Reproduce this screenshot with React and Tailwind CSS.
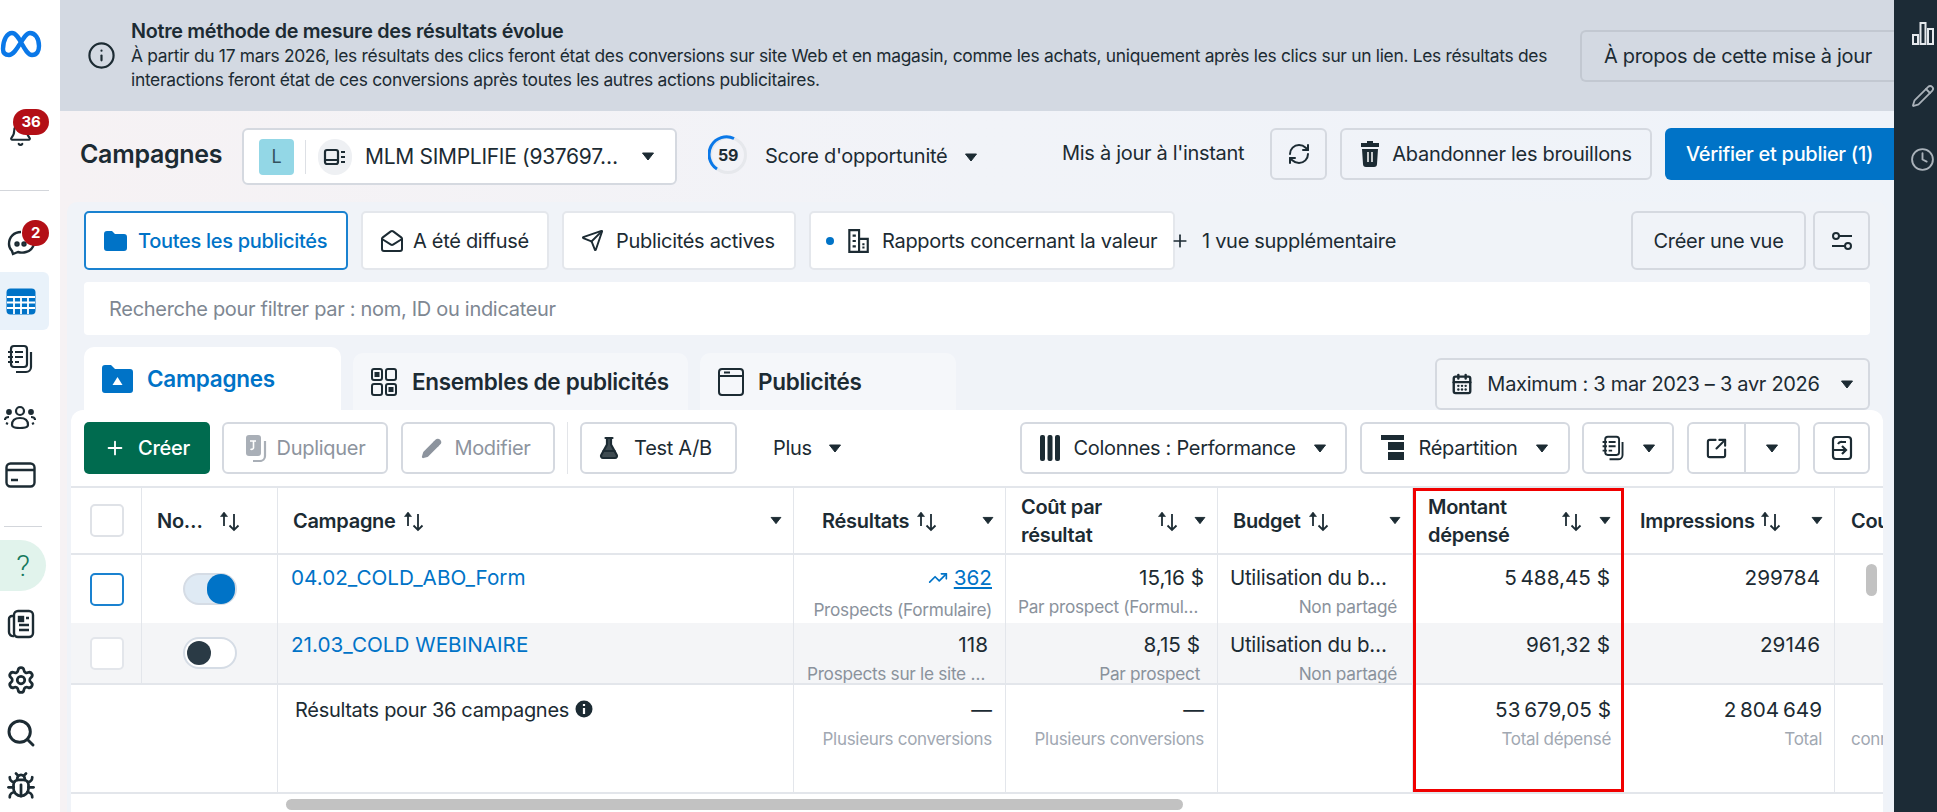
import {
  Bell, Bug, Clock, Info, MailOpen, Pencil, Plus, RefreshCw, Search, Send,
  Settings, SquareArrowOutUpRight, TrendingUp, CalendarDays, FlaskConical,
} from 'lucide-react';

const Caret = ({ className = '' }) => (
  <svg width="14" height="9" viewBox="0 0 14 9" className={`shrink-0 ${className}`}>
    <path d="M1.5 1h11L7 8z" fill="#1c2b33" stroke="#1c2b33" strokeLinejoin="round" />
  </svg>
);

const Sort = ({ className = '' }) => (
  <svg width="23" height="22" viewBox="0 0 23 22" fill="none" stroke="#1c2b33" strokeWidth="1.8" className={`shrink-0 ${className}`}>
    <path d="M6 16V3" />
    <path d="M2.500 6.500 6 2l3.500 4.500z" fill="#1c2b33" strokeWidth="0.6" />
    <path d="M16 4v16M11.500 15.500 16 20l4.500-4.500" />
  </svg>
);

const DocStack = ({ color = '#1c2b33', size = 30 }) => (
  <svg width={size} height={size} viewBox="0 0 30 30" fill="none" stroke={color} strokeWidth="2.2">
    <rect x="6" y="2" width="16" height="21" rx="3" />
    <path d="M26 8v15a5 5 0 0 1-5 5H11" />
    <path d="M10 8h8M10 13h8M10 18h4M3 8h5M3 13h5M3 18h5" />
  </svg>
);

function Btn({ className = '', border = 'border-[#d5d9e0]', tone = 'text-[#1c2b33]', children }) {
  return (
    <div className={`flex items-center justify-center rounded-[6px] border-2 text-[20px] shrink-0 ${border} ${tone} ${className}`}>
      {children}
    </div>
  );
}

function Rail() {
  return (
    <aside className="w-[60px] shrink-0 bg-white flex flex-col text-[#1c2b33]">
      <div className="h-[88px] pt-[29px]">
        <svg width="42" height="30" viewBox="0 0 42 30" fill="none" stroke="#0a78e8" strokeWidth="4.4" strokeLinecap="round">
          <path d="M3 20c0-9 4-16 9-16 8 0 12 22 20 22 5 0 7-4 7-9 0-8-4-13-9-13-7 0-13 22-21 22-4 0-6-2-6-6z" />
        </svg>
      </div>
      <div className="relative h-[103px] w-[49px] border-b border-[#d3d6db] pt-[34px] pl-[8px]">
        <Bell size={25} strokeWidth={2} />
        <span className="absolute left-[13px] top-[21px] w-[36px] h-[26px] rounded-full bg-[#b30f16] text-white text-[15px] font-bold flex items-center justify-center">36</span>
      </div>
      <div className="relative h-[81px] pt-[37px] pl-[6px]">
        <svg width="30" height="30" viewBox="0 0 30 30" fill="none" stroke="#1c2b33" strokeWidth="2.4">
          <path d="M15 4C8 4 3 9 3 16c0 3 1 5 3 7l1 3 5-2c3 1 5 1 8 0 4-1 7-4 8-8" />
          <circle cx="11" cy="16" r="1.500" />
          <circle cx="18" cy="16" r="1.500" />
        </svg>
        <span className="absolute left-[22px] top-[29px] w-[27px] h-[26px] rounded-full bg-[#b30f16] text-white text-[15px] font-bold flex items-center justify-center">2</span>
      </div>
      <div className="w-[49px] h-[58px] rounded-r-[6px] bg-[#e9f2fa] flex items-center pl-[6px]">
        <svg width="30" height="27" viewBox="0 0 30 27">
          <rect width="29" height="26" x="0.5" y="0.5" rx="4" fill="#0073c7" />
          <path d="M1 9h28M1 14.500h28M1 20h28M8 9v17M15 9v17M22 9v17" stroke="#fff" strokeWidth="1.8" />
        </svg>
      </div>
      <div className="h-[58px] flex items-center pl-[5px]"><DocStack /></div>
      <div className="h-[58px] flex items-center pl-[4px]">
        <svg width="32" height="24" viewBox="0 0 32 24" fill="none" stroke="#1c2b33" strokeWidth="2.2">
          <circle cx="16" cy="6" r="4" />
          <path d="M8 20c0-5 3-7 8-7s8 2 8 7c0 2-3 3-8 3s-8-1-8-3z" />
          <circle cx="5" cy="7" r="1.800" fill="#1c2b33" /><circle cx="27" cy="7" r="1.800" fill="#1c2b33" />
          <path d="M1 15c0-2 2-3 4-3M31 15c0-2-2-3-4-3M2 18l2 1M30 18l-2 1" />
        </svg>
      </div>
      <div className="h-[57px] flex items-center pl-[5px]">
        <svg width="31" height="26" viewBox="0 0 31 26" fill="none" stroke="#1c2b33" strokeWidth="2.4">
          <rect x="1.500" y="1.500" width="28" height="23" rx="4" />
          <path d="M1.500 8h28M6 18h7" />
        </svg>
      </div>
      <div className="h-[24px] w-[38px] ml-[4px] border-b border-[#d3d6db]" />
      <div className="mt-[13px] w-[46px] h-[51px] rounded-r-full bg-[#e1f3ec] flex items-center justify-center text-[#16795d] text-[30px] font-light font-['Roboto',sans-serif]">?</div>
      <div className="h-[62px] mt-[2px] flex items-center pl-[7px]">
        <svg width="28" height="30" viewBox="0 0 28 30" fill="none" stroke="#1c2b33" strokeWidth="2.4">
          <rect x="7" y="2" width="19" height="26" rx="4" />
          <path d="M7 7H5a3 3 0 0 0-3 3v13a4 4 0 0 0 5 4" />
          <rect x="12" y="8" width="4" height="4" fill="#1c2b33" />
          <path d="M19 9h3M12 16h10M12 21h10" />
        </svg>
      </div>
      <div className="h-[50px] flex items-center pl-[6px]"><Settings size={30} strokeWidth={2.2} /></div>
      <div className="h-[55px] flex items-center pl-[5px]"><Search size={32} strokeWidth={2.2} /></div>
      <div className="h-[51px] flex items-center pl-[6px]"><Bug size={30} strokeWidth={2.2} /></div>
    </aside>
  );
}

function Banner() {
  return (
    <div className="h-[111px] bg-[#d3d9e2] flex text-[#1c2b33] shrink-0">
      <div className="pl-[27px] pt-[41px] w-[71px] shrink-0"><Info size={29} strokeWidth={1.8} /></div>
      <div className="w-[1425px] pt-[17px] shrink-0">
        <div className="text-[19.800px] font-semibold leading-[28px]">Notre méthode de mesure des résultats évolue</div>
        <div className="text-[17.400px] leading-[24px] mt-[-1px]">
          À partir du 17 mars 2026, les résultats des clics feront état des conversions sur site Web et en magasin, comme les achats, uniquement après les clics sur un lien. Les résultats des interactions feront état de ces conversions après toutes les autres actions publicitaires.
        </div>
      </div>
      <div className="pt-[30px] pl-[24px] flex-1">
        <Btn border="border-[#c2c8d1]" className="w-full h-[52px] rounded-r-none border-r-0">À propos de cette mise à jour</Btn>
      </div>
    </div>
  );
}

function Header() {
  return (
    <div className="h-[91px] flex items-start pt-[17px] pl-[20px] text-[#1c2b33]">
      <div className="text-[25px] font-semibold w-[162px] pt-[10px] leading-[32px] shrink-0">Campagnes</div>
      <Btn className="w-[435px] h-[57px] bg-white justify-start pl-[15px]">
        <span className="w-[35px] h-[36px] rounded-[4px] bg-[#93d7e6] flex items-center justify-center text-[18px] text-[#33525e]">L</span>
        <span className="w-px h-[34px] bg-[#dde0e5] ml-[11px]" />
        <span className="w-[34px] h-[36px] ml-[12px] rounded-full bg-[#eef0f3] flex items-center justify-center">
          <svg width="24" height="20" viewBox="0 0 24 20" fill="none" stroke="#1c2b33" strokeWidth="2.2">
            <rect x="2" y="3" width="13" height="14" rx="2" />
            <path d="M2 13h13M18 5h4M18 10h4M18 15h4" />
          </svg>
        </span>
        <span className="ml-[13px] w-[276px] text-[21px] whitespace-nowrap">MLM SIMPLIFIE (937697…</span>
        <Caret />
      </Btn>
      <div className="ml-[31px] w-[40px] h-[40px] relative shrink-0 mt-[7px]">
        <svg width="40" height="40" viewBox="0 0 40 40" fill="none" className="absolute inset-0">
          <circle cx="20" cy="20" r="17.500" stroke="#e6e8ec" strokeWidth="3" />
          <path d="M26 3.500A17.500 17.500 0 0 0 9 34" stroke="#0a78e8" strokeWidth="3" />
        </svg>
        <span className="absolute inset-0 flex items-center justify-center text-[16px] font-bold">59</span>
      </div>
      <span className="ml-[17px] text-[20px] w-[199px] mt-[15px] leading-[26px] whitespace-nowrap">Score d'opportunité</span>
      <Caret className="mt-[25px]" />
      <span className="ml-[84px] text-[20px] w-[208px] mt-[12px] leading-[26px] whitespace-nowrap">Mis à jour à l'instant</span>
      <Btn className="w-[57px] h-[52px]"><RefreshCw size={24} strokeWidth={2} /></Btn>
      <Btn className="w-[312px] h-[52px] ml-[13px] gap-[12px]">
        <svg width="20" height="26" viewBox="0 0 20 26" fill="#1c2b33">
          <path d="M7 0h6v2h6v4H1V2h6zM2 8h16l-1 15a3 3 0 0 1-3 3H6a3 3 0 0 1-3-3z" />
          <path d="M8 11v10M12 11v10" stroke="#fff" strokeWidth="1.5" />
        </svg>
        <span>Abandonner les brouillons</span>
      </Btn>
      <div className="ml-[13px] w-[229px] h-[52px] rounded-l-[6px] bg-[#0073c7] text-white text-[20px] font-medium flex items-center justify-center shrink-0">Vérifier et publier (1)</div>
    </div>
  );
}

function ViewTab({ active, className = '', children }) {
  return (
    <div className={`h-[59px] rounded-[5px] border-2 flex items-center text-[20px] shrink-0 ${active ? 'border-[#1a82d0] text-[#0073c7] bg-white font-medium' : 'border-[#e4e7ec] bg-white'} ${className}`}>
      {children}
    </div>
  );
}

function Views() {
  return (
    <div className="flex items-center pl-[17px] gap-[13px] mt-[9px]">
      <ViewTab active className="w-[264px] pl-[18px] gap-[11px]">
        <svg width="23" height="20" viewBox="0 0 23 20" fill="#0073c7"><path d="M0 3a3 3 0 0 1 3-3h5l3 3h9a3 3 0 0 1 3 3v11a3 3 0 0 1-3 3H3a3 3 0 0 1-3-3z" /></svg>
        <span className="whitespace-nowrap">Toutes les publicités</span>
      </ViewTab>
      <ViewTab className="w-[188px] pl-[17px] gap-[9px]"><MailOpen size={24} strokeWidth={2} /><span className="whitespace-nowrap">A été diffusé</span></ViewTab>
      <ViewTab className="w-[234px] pl-[17px] gap-[12px]"><Send size={23} strokeWidth={2} /><span className="whitespace-nowrap">Publicités actives</span></ViewTab>
      <ViewTab className="w-[366px] pl-[15px]">
        <span className="w-[8px] h-[8px] rounded-full bg-[#0073c7]" />
        <svg width="24" height="26" viewBox="0 0 22 24" fill="none" stroke="#1c2b33" strokeWidth="2" className="ml-[12px]">
          <path d="M12 22H3V2h9zM12 10h8v12h-8zM6 7h3M6 12h3M6 17h3M15 15h2M15 18h2" />
        </svg>
        <span className="ml-[12px] whitespace-nowrap">Rapports concernant la valeur</span>
      </ViewTab>
      <span className="ml-[-18px] flex items-center text-[20px] font-normal whitespace-nowrap">
        <Plus size={20} strokeWidth={2} className="mr-[12px]" />1 vue supplémentaire
      </span>
      <div className="flex-1" />
      <Btn className="w-[175px] h-[59px]">Créer une vue</Btn>
      <Btn className="w-[57px] h-[59px] ml-[-6px] mr-[17px]">
        <svg width="22" height="20" viewBox="0 0 22 20" fill="none" stroke="#1c2b33" strokeWidth="2">
          <circle cx="5" cy="5" r="3" /><circle cx="17" cy="15" r="3" /><path d="M8 5h13M1 15h13" />
        </svg>
      </Btn>
    </div>
  );
}

function LevelTabs() {
  return (
    <div className="flex items-end pl-[17px] mt-[12px] h-[63px]">
      <div className="w-[257px] h-[63px] rounded-t-[10px] bg-white flex items-center pl-[18px] gap-[14px] text-[#0073c7] text-[22.500px] font-semibold shrink-0">
        <svg width="31" height="28" viewBox="0 0 31 28">
          <path d="M0 3a3 3 0 0 1 3-3h6l4 4h15a3 3 0 0 1 3 3v18a3 3 0 0 1-3 3H3a3 3 0 0 1-3-3z" fill="#0073c7" />
          <path d="M15.500 12l5 8h-10z" fill="#fff" />
        </svg>
        Campagnes
      </div>
      <div className="w-[335px] h-[57px] ml-[12px] rounded-t-[10px] bg-[#f5f7fa] flex items-center pl-[18px] gap-[15px] text-[#1c2b33] text-[22.500px] font-semibold shrink-0">
        <svg width="26" height="28" viewBox="0 0 26 28" fill="none" stroke="#1c2b33" strokeWidth="2">
          <rect x="1" y="1" width="10" height="11" rx="2" /><rect x="15" y="1" width="10" height="11" rx="2" />
          <rect x="1" y="16" width="10" height="11" rx="2" /><rect x="15" y="16" width="10" height="11" rx="2" />
          <rect x="4.500" y="5" width="3" height="3" fill="#1c2b33" /><rect x="18.500" y="20" width="3" height="3" fill="#1c2b33" />
        </svg>
        <span className="whitespace-nowrap">Ensembles de publicités</span>
      </div>
      <div className="w-[256px] h-[57px] ml-[12px] rounded-t-[10px] bg-[#f5f7fa] flex items-center pl-[18px] gap-[14px] text-[#1c2b33] text-[22.500px] font-semibold shrink-0">
        <svg width="26" height="28" viewBox="0 0 26 28" fill="none" stroke="#1c2b33" strokeWidth="2">
          <rect x="1" y="1" width="24" height="26" rx="3" /><path d="M1 8h24M6 4.500h6" />
        </svg>
        Publicités
      </div>
      <div className="flex-1" />
      <Btn className="w-[435px] h-[52px] mr-[17px] gap-[14px] bg-[#f3f5f8]">
        <CalendarDays size={22} strokeWidth={2.6} />
        <span className="whitespace-nowrap">Maximum : 3 mar 2023 – 3 avr 2026</span>
        <Caret className="ml-[6px]" />
      </Btn>
    </div>
  );
}

function Toolbar() {
  return (
    <div className="flex items-center h-[52px] mt-[12px] pl-[13px] shrink-0">
      <div className="w-[126px] h-[52px] rounded-[5px] bg-[#006b4f] text-white text-[20px] font-medium flex items-center justify-center gap-[12px] shrink-0">
        <Plus size={22} strokeWidth={2} />Créer
      </div>
      <Btn tone="text-[#8d949e]" className="w-[166px] h-[52px] ml-[12px] gap-[10px]">
        <svg width="22" height="28" viewBox="0 0 22 28">
          <rect x="1" y="1" width="15" height="21" rx="3" fill="#a9afb7" />
          <path d="M20 7v15a5 5 0 0 1-5 5H8" fill="none" stroke="#a9afb7" strokeWidth="2.2" />
          <path d="M5 7h6M8.500 7v7a2 2 0 0 1-3 1" fill="none" stroke="#fff" strokeWidth="1.6" />
        </svg>
        Dupliquer
      </Btn>
      <Btn tone="text-[#8d949e]" className="w-[154px] h-[52px] ml-[13px] gap-[12px] pr-[4px]">
        <Pencil size={21} fill="#8d949e" stroke="#8d949e" />Modifier
      </Btn>
      <div className="w-px h-[52px] bg-[#e3e5e9] ml-[12px]" />
      <Btn className="w-[157px] h-[52px] ml-[12px] gap-[13px] pr-[8px]">
        <FlaskConical size={24} strokeWidth={2.2} fill="#1c2b33" fillOpacity="0.85" />Test A/B
      </Btn>
      <span className="ml-[36px] text-[20px] text-[#1c2b33] w-[55px]">Plus</span>
      <Caret />
      <div className="flex-1" />
      <Btn className="w-[327px] h-[52px] gap-[13px]">
        <svg width="20" height="26" viewBox="0 0 20 26" fill="#1c2b33">
          <rect width="5" height="26" rx="2" /><rect x="7.500" width="5" height="26" rx="2" /><rect x="15" width="5" height="26" rx="2" />
        </svg>
        <span className="whitespace-nowrap">Colonnes : Performance</span>
        <Caret className="ml-[4px]" />
      </Btn>
      <Btn className="w-[210px] h-[52px] ml-[13px] gap-[13px]">
        <svg width="24" height="26" viewBox="0 0 24 26" fill="#1c2b33">
          <rect width="23" height="5" /><rect x="7" y="7" width="16" height="8" /><rect x="7" y="17" width="16" height="8" />
        </svg>
        Répartition
        <Caret className="ml-[4px]" />
      </Btn>
      <Btn className="w-[92px] h-[52px] ml-[12px] gap-[16px]"><DocStack size={26} /><Caret /></Btn>
      <div className="w-[113px] h-[52px] ml-[13px] rounded-[6px] border-2 border-[#d5d9e0] flex items-center shrink-0">
        <span className="w-[57px] flex justify-center border-r-2 border-[#d5d9e0] h-full items-center"><SquareArrowOutUpRight size={23} strokeWidth={2.2} /></span>
        <span className="flex-1 flex justify-center"><Caret /></span>
      </div>
      <Btn className="w-[57px] h-[52px] ml-[13px] mr-[13px]">
        <svg width="22" height="26" viewBox="0 0 22 26" fill="none" stroke="#1c2b33" strokeWidth="2.2">
          <rect x="2" y="2" width="18" height="22" rx="3" /><path d="M2 15h13M11 11l4 4-4 4M7 9a4 4 0 0 1 4-2h4" />
        </svg>
      </Btn>
    </div>
  );
}

const cols = 'grid grid-cols-[71px_136px_516px_212px_212px_195px_210px_212px_200px]';
const Cell = ({ className = '', children }) => (
  <div className={`border-r border-[#e3e6eb] min-w-0 ${className}`}>{children}</div>
);
const Head = ({ first, second, caret = true, left = 'pl-[15px]', arrowClass = '' }) => (
  <Cell className={`flex items-center pr-[10px] ${left}`}>
    <div className="font-semibold text-[20px] leading-[28px] text-[#1c2b33] whitespace-nowrap">
      {first}{second && <br />}{second}
    </div>
    <Sort className={arrowClass || 'ml-[6px]'} />
    <div className="flex-1" />
    {caret && <Caret className="scale-90" />}
  </Cell>
);
const Num = ({ value, sub, subClass = 'text-[#8a929c] text-[17.250px]', pr = 'pr-[13px]', top = 'pt-[9px]' }) => (
  <Cell className={`text-right overflow-hidden whitespace-nowrap ${pr} ${top}`}>
    <div className="text-[20.700px] leading-[28px] tracking-[0px] text-[#1c2b33]">{value}</div>
    {sub && <div className={`leading-[24px] mt-[3px] ${subClass}`}>{sub}</div>}
  </Cell>
);
const BudgetText = () => (
  <span className="block text-left pl-[12px] text-[20.500px] tracking-[-0.3px]">Utilisation du b…</span>
);
const totalSub = 'text-[#a1a8b2] text-[17px]';

function Table() {
  return (
    <div className="relative flex-1 flex flex-col overflow-hidden text-[#1c2b33]">
      <div className={`${cols} h-[69px] border-y-2 border-[#e3e6eb] mt-[12px] shrink-0`}>
        <Cell className="flex items-center pl-[19px]">
          <span className="w-[34px] h-[33px] rounded-[5px] border-2 border-[#dfe2e7] bg-white" />
        </Cell>
        <Head first="No…" arrowClass="ml-[15px]" caret={false} />
        <Head first="Campagne" />
        <Head first="Résultats" left="pl-[28px]" />
        <Head first="Coût par" second="résultat" arrowClass="ml-[54px]" />
        <Head first="Budget" />
        <Head first="Montant" second="dépensé" arrowClass="ml-[50px]" />
        <Head first="Impressions" left="pl-[17px]" arrowClass="ml-[4px]" />
        <div className="pl-[16px] font-semibold text-[20px] flex items-center">Cou</div>
      </div>

      <div className={`${cols} h-[68px] shrink-0`}>
        <Cell className="flex items-center pl-[19px]">
          <span className="w-[34px] h-[33px] rounded-[5px] border-2 border-[#1a82d0] bg-white" />
        </Cell>
        <Cell className="flex items-center pl-[41px]">
          <span className="w-[54px] h-[32px] rounded-full bg-[#dfeaf4] border-2 border-[#d5dce5] relative">
            <span className="absolute right-0 -top-[1px] w-[28px] h-[30px] rounded-full bg-[#0073c7]" />
          </span>
        </Cell>
        <Cell className="pl-[13px] pt-[9px] text-[20.700px] tracking-[0px] leading-[28px] text-[#0073c7] whitespace-nowrap">04.02_COLD_ABO_Form</Cell>
        <Num value={<span className="inline-flex items-center gap-[6px]"><TrendingUp size={20} className="text-[#0073c7]" /><span className="text-[#0073c7] underline">362</span></span>} sub="Prospects (Formulaire)" />
        <Num value="15,16 $" sub={<span className="block text-left pl-[12px]">Par prospect (Formul…</span>} />
        <Num value={<BudgetText />} sub="Non partagé" pr="pr-[15px]" />
        <Num value={'5\u202f488,45 $'} pr="pr-[12px]" />
        <Num value="299784" pr="pr-[14px]" />
        <div />
      </div>

      <div className={`${cols} h-[60px] bg-[#f4f5f7] shrink-0`}>
        <Cell className="flex items-center pl-[19px]">
          <span className="w-[34px] h-[33px] rounded-[5px] border-2 border-[#e3e6eb] bg-white" />
        </Cell>
        <Cell className="flex items-center pl-[41px]">
          <span className="w-[54px] h-[32px] rounded-full bg-white border-2 border-[#d5dce5] relative">
            <span className="absolute left-[2px] top-[2px] w-[24px] h-[24px] rounded-full bg-[#2a3a45]" />
          </span>
        </Cell>
        <Cell className="pl-[13px] pt-[8px] text-[20.700px] tracking-[0px] leading-[28px] text-[#0073c7] whitespace-nowrap">21.03_COLD WEBINAIRE</Cell>
        <Num value="118" sub={<span className="block text-left pl-[13px]">Prospects sur le site …</span>} pr="pr-[17px]" top="pt-[8px]" />
        <Num value="8,15 $" sub="Par prospect" pr="pr-[17px]" top="pt-[8px]" />
        <Num value={<BudgetText />} sub="Non partagé" pr="pr-[15px]" top="pt-[8px]" />
        <Num value="961,32 $" pr="pr-[12px]" top="pt-[8px]" />
        <Num value="29146" pr="pr-[14px]" top="pt-[8px]" />
        <div />
      </div>

      <div className={`${cols} h-[111px] border-y-2 border-[#e3e6eb] shrink-0`}>
        <Cell className="col-span-2" />
        <Cell className="pl-[17px] pt-[11px] text-[20px] leading-[28px] flex items-start gap-[6px]">
          Résultats pour 36 campagnes
          <svg width="18" height="18" viewBox="0 0 18 18" className="mt-[4px]">
            <circle cx="9" cy="9" r="8.500" fill="#1c2b33" />
            <path d="M9 8v6M9 4v2" stroke="#fff" strokeWidth="2.2" />
          </svg>
        </Cell>
        <Num value="—" sub="Plusieurs conversions" subClass={totalSub} top="pt-[11px]" />
        <Num value="—" sub="Plusieurs conversions" subClass={totalSub} top="pt-[11px]" />
        <Cell />
        <Num value={'53\u202f679,05 $'} sub="Total dépensé" subClass={totalSub} pr="pr-[11px]" top="pt-[11px]" />
        <Num value={'2\u202f804\u202f649'} sub="Total" subClass={totalSub} pr="pr-[12px]" top="pt-[11px]" />
        <div className="pl-[16px] pt-[42px] text-[17px] leading-[24px] text-[#a1a8b2]">conn</div>
      </div>

      <div className="ml-[215px] mt-[5px] w-[897px] h-[11px] rounded-full bg-[#c2c2c2] shrink-0" />

      {/* vertical scrollbar and the highlight box sit over the table */}
      <div className="absolute left-[1795px] top-[90px] w-[11px] h-[32px] rounded-full bg-[#c2c2c2]" />
      <div className="absolute left-[1342px] top-[14px] w-[211px] h-[304px] border-[3px] border-[#f00000] pointer-events-none" />
    </div>
  );
}

export default function App() {
  return (
    <div className="h-[812px] w-full flex overflow-hidden bg-white font-['Inter',sans-serif] tracking-[-0.3px]">
      <Rail />
      <main className="flex-1 min-w-0 flex flex-col bg-gradient-to-r from-[#f6f2f4] via-[#f1f3f8] to-[#eff3f9]">
        <Banner />
        <Header />
        <div className="flex-1 flex flex-col ml-[7px] mr-[7px] rounded-t-[10px] bg-[#f0f3f8] min-h-0 text-[#1c2b33]">
          <Views />
          <div className="ml-[17px] mr-[17px] mt-[12px] h-[53px] rounded-[4px] bg-white pl-[25px] flex items-center text-[20px] text-[#7e8792] shrink-0">
            Recherche pour filtrer par : nom, ID ou indicateur
          </div>
          <LevelTabs />
          <div className="flex-1 flex flex-col ml-[4px] mr-[4px] rounded-t-[12px] bg-white min-h-0">
            <Toolbar />
            <Table />
          </div>
        </div>
      </main>
      <aside className="w-[43px] shrink-0 bg-[#1c2b36] flex flex-col items-center pl-[14px] pt-[21px] gap-[39px] text-[#e4e8ec]">
        <svg width="24" height="24" viewBox="0 0 24 24" fill="none" stroke="currentColor" strokeWidth="2">
          <rect x="2" y="14" width="5" height="9" /><rect x="9.500" y="2" width="5" height="21" /><rect x="17" y="8" width="5" height="15" />
        </svg>
        <Pencil size={24} strokeWidth={1.8} className="text-[#aab2ba]" />
        <Clock size={25} strokeWidth={1.8} className="text-[#aab2ba]" />
      </aside>
    </div>
  );
}
